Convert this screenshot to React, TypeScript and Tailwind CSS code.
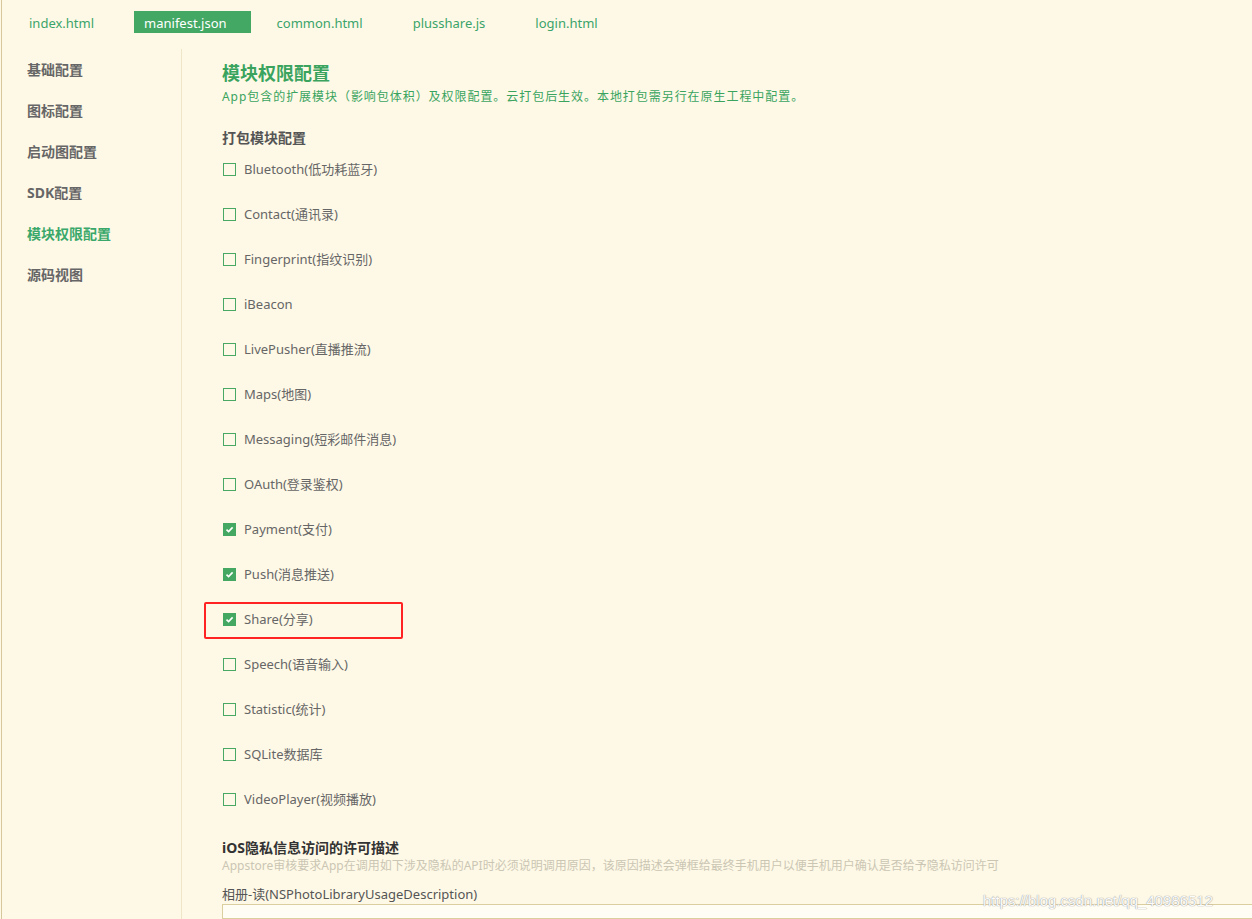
import React from "react";

const font = { fontFamily: '"Noto Sans", "Noto Sans CJK SC", sans-serif' };

const tabs = ["index.html", "manifest.json", "common.html", "plusshare.js", "login.html"];
const side = ["基础配置", "图标配置", "启动图配置", "SDK配置", "模块权限配置", "源码视图"];
const mods: [string, boolean][] = [
  ["Bluetooth(低功耗蓝牙)", false],
  ["Contact(通讯录)", false],
  ["Fingerprint(指纹识别)", false],
  ["iBeacon", false],
  ["LivePusher(直播推流)", false],
  ["Maps(地图)", false],
  ["Messaging(短彩邮件消息)", false],
  ["OAuth(登录鉴权)", false],
  ["Payment(支付)", true],
  ["Push(消息推送)", true],
  ["Share(分享)", true],
  ["Speech(语音输入)", false],
  ["Statistic(统计)", false],
  ["SQLite数据库", false],
  ["VideoPlayer(视频播放)", false],
];

export default function App() {
  return (
    <div className="w-[1252px] h-[919px] overflow-hidden bg-[#fef9e6] pl-px relative" style={font}>
      <div className="h-full border-l border-[#d6c79c] flex flex-col">
        <div className="h-[49px] pt-[11px] pl-[17px] flex gap-4">
          {tabs.map((t, i) => (
            <div
              key={t}
              className={
                "h-[22px] pl-[10px] pr-[24px] flex items-center text-[13px] leading-[22px] pt-[1px] " +
                (i === 1 ? "bg-[#42a864] text-white" : "text-[#3aa46a]")
              }
            >
              {t}
            </div>
          ))}
        </div>
        <div className="flex flex-1 min-h-0">
          <div className="w-[180px] border-r border-[#efe6c8] flex flex-col">
            {side.map((s, i) => (
              <div
                key={s}
                className={
                  "h-[41px] pl-[25px] flex items-center text-[14px] font-bold " +
                  (i === 4 ? "text-[#3aa86a]" : "text-[#666]")
                }
              >
                {s}
              </div>
            ))}
          </div>
          <div className="flex-1 pl-[40px] pt-[12px] flex flex-col">
            <div className="text-[18px] leading-[24px] font-bold text-[#3aa45f]">模块权限配置</div>
            <div className="mt-[4px] text-[12px] leading-[16px] tracking-[0.95px] text-[#3aa45f]">
              App包含的扩展模块（影响包体积）及权限配置。云打包后生效。本地打包需另行在原生工程中配置。
            </div>
            <div className="mt-[24px] text-[14px] leading-[18px] font-bold text-[#555]">打包模块配置</div>
            <div className="flex flex-col">
              {mods.map(([m, c]) => (
                <div key={m} className="h-[45px] flex items-center relative">
                  {c ? (
                    <div className="w-[13px] h-[13px] ml-px bg-[#45a862] flex items-center justify-center">
                      <svg width="9" height="9" viewBox="0 0 9 9">
                        <path d="M1.5 4.6 L3.6 6.6 L7.6 2.4" stroke="white" strokeWidth="1.6" fill="none" />
                      </svg>
                    </div>
                  ) : (
                    <div className="w-[13px] h-[13px] ml-px border border-[#4aa865]" />
                  )}
                  <span className="ml-[8px] text-[13px] text-[#666]">{m}</span>
                  {m.startsWith("Share") && (
                    <div className="absolute left-[-18px] top-[5px] w-[199px] h-[37px] border-2 border-[#ff2323] rounded-[2px]" />
                  )}
                </div>
              ))}
            </div>
            <div className="mt-[16px] text-[14px] leading-[20px] font-bold text-[#333]">iOS隐私信息访问的许可描述</div>
            <div className="text-[12px] leading-[16px] text-[#cbc6b4]">
              Appstore审核要求App在调用如下涉及隐私的API时必须说明调用原因，该原因描述会弹框给最终手机用户以便手机用户确认是否给予隐私访问许可
            </div>
            <div className="mt-[11px] text-[13px] leading-[18px] text-[#555]">相册-读(NSPhotoLibraryUsageDescription)</div>
            <div className="mt-[1px] h-[40px] -mr-[4px] border border-[#dccf9f] bg-[#fffdf4]" />
          </div>
        </div>
      </div>
      <div
        className="absolute left-[983px] top-[890px] text-[15px] text-[#fbfbfb]"
        style={{ fontFamily: '"Liberation Sans", Arial, sans-serif', textShadow: "0 0 1px #999, 0 0 1px #aaa" }}
      >
        https://blog.csdn.net/qq_40986512
      </div>
    </div>
  );
}
